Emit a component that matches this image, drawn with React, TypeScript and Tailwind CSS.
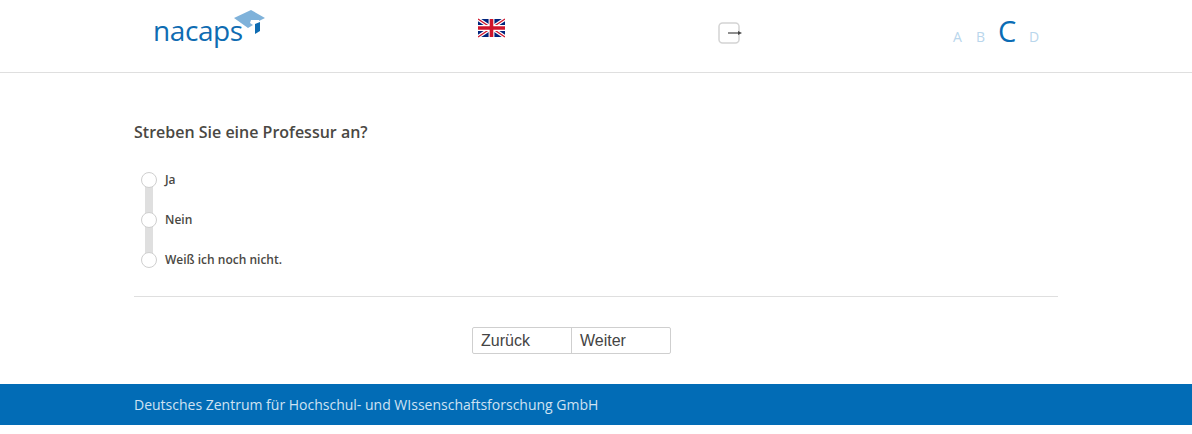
import React from 'react';

const Logo = () => (
  <div className="relative w-[114px] h-[40px]">
    <span className="absolute left-0 top-[12px] text-[28px] leading-[36px] tracking-[-0.4px] text-[#0f6cb2] font-['Open_Sans',sans-serif]">nacaps</span>
    <svg className="absolute left-[81px] top-[10px]" width="33" height="26" viewBox="0 0 33 26">
      <path d="M0 8 L17 0 L31 8 L25 11 L25 10 L17 10 L16 13 L19 15 L14 18 Z" fill="#7fb2da" />
      <path d="M21 14 L26 12 L26 21 L21 24 Z" fill="#0f6cb2" />
    </svg>
  </div>
);

const Flag = () => (
  <svg width="27" height="20" viewBox="0 0 60 40">
    <rect width="60" height="40" fill="#00247d" />
    <path d="M0 0 L60 40 M60 0 L0 40" stroke="#fff" strokeWidth="8" />
    <path d="M0 0 L60 40 M60 0 L0 40" stroke="#cf142b" strokeWidth="3" />
    <path d="M30 0 V40 M0 20 H60" stroke="#fff" strokeWidth="13" />
    <path d="M30 0 V40 M0 20 H60" stroke="#cf142b" strokeWidth="8" />
  </svg>
);

const ExitIcon = () => (
  <svg width="24" height="22" viewBox="0 0 24 22">
    <rect x="1" y="1" width="20" height="20" rx="3.5" fill="#fff" stroke="#d4d4d4" strokeWidth="1.5" />
    <path d="M10 11 H20" stroke="#444" strokeWidth="1.2" />
    <path d="M20 9 L24 11 L20 13 Z" fill="#444" />
  </svg>
);

const options = ['Ja', 'Nein', 'Weiß ich noch nicht.'];

export default function App() {
  return (
    <div className="min-h-[434px] bg-white font-['Open_Sans',sans-serif]">
      <header className="h-[73px] border-b border-[#dfdfdf] flex">
        <div className="w-[478px] pl-[153px]"><Logo /></div>
        <div className="w-[240px] pt-[18px]"><Flag /></div>
        <div className="w-[234px] pt-[22px]"><ExitIcon /></div>
        <div className="flex items-baseline h-[44px] pt-[11px] text-[#b9d6ec] text-[14px]">
          <span className="ml-[1px] w-[23px]">A</span>
          <span className="w-[22px]">B</span>
          <span className="w-[31px] text-[29px] leading-[40px] text-[#0a6cb5]">C</span>
          <span>D</span>
        </div>
      </header>

      <main className="w-[924px] ml-[134px]">
        <h1 className="pt-[48px] text-[16px] leading-[22px] font-semibold text-[#4a4843]">Streben Sie eine Professur an?</h1>
        <div className="relative mt-[29px] flex flex-col gap-[24px] pb-[28px] border-b border-[#dfdfdf]">
          <div className="absolute left-[11px] top-[8px] w-[8px] h-[80px] bg-[#dfdfdf]" />
          {options.map(label => (
            <label key={label} className="relative flex items-center h-[16px] pl-[7px]">
              <span className="w-[16px] h-[16px] rounded-full bg-white border border-[#cfcfcf]" />
              <span className="ml-[8px] text-[12px] font-semibold text-[#4a4843]">{label}</span>
            </label>
          ))}
        </div>
        <div className="pt-[30px] pl-[338px]">
          <div className="flex w-[199px] h-[27px] border border-[#cfcfcf] rounded-[2px] font-['Liberation_Sans',sans-serif] text-[16px] text-[#444]">
            <button className="w-[99px] text-left pl-[8px] border-r border-[#cfcfcf]">Zurück</button>
            <button className="flex-1 text-left pl-[8px]">Weiter</button>
          </div>
        </div>
      </main>

      <footer className="mt-[30px] h-[41px] bg-[#026cb6] pl-[134px] flex items-center text-[14px] text-[#cfe2f2]">
        Deutsches Zentrum für Hochschul- und WIssenschaftsforschung GmbH
      </footer>
    </div>
  );
}
